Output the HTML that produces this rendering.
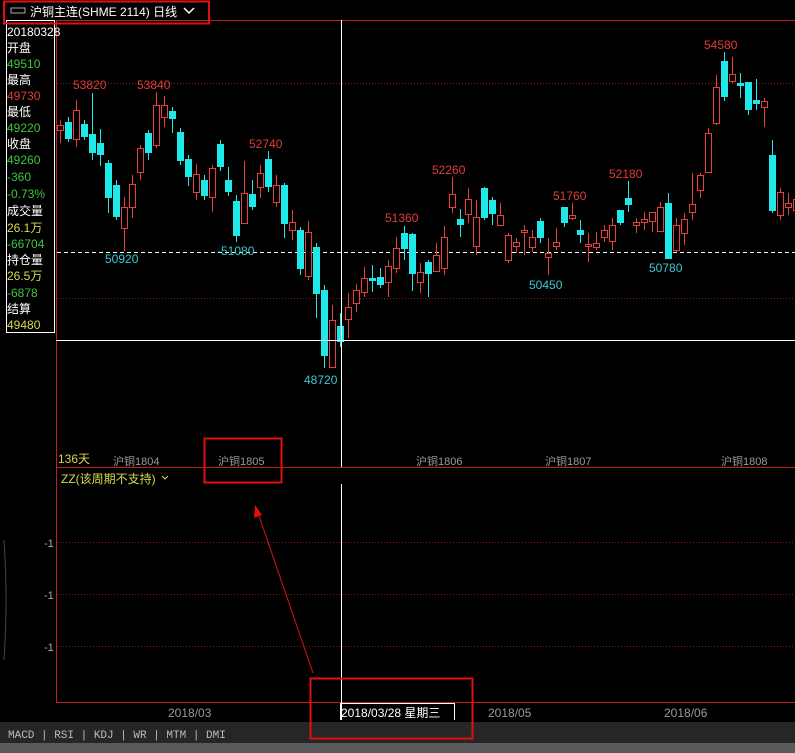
<!DOCTYPE html>
<html><head><meta charset="utf-8"><style>
html,body{margin:0;padding:0;background:#000;width:795px;height:753px;overflow:hidden;font-family:"Liberation Sans","Noto Sans CJK SC",sans-serif}
svg{position:absolute;left:0;top:0}
.t{font-family:"Liberation Sans","Noto Sans CJK SC",sans-serif;font-size:12px}
</style></head><body>
<svg id="s" width="795" height="753" xmlns="http://www.w3.org/2000/svg">
<rect x="0" y="722" width="795" height="21" fill="#262626"/>
<rect x="0" y="743" width="795" height="10" fill="#5a5a5a"/>
<path d="M4 540 Q8 600 4 660" stroke="#444" fill="none"/>
<g stroke="#8a1a1a" stroke-dasharray="1,2" stroke-width="1">
<line x1="57" y1="83.5" x2="795" y2="83.5"/>
<line x1="57" y1="298.5" x2="795" y2="298.5"/>
<line x1="57" y1="542.5" x2="795" y2="542.5"/>
<line x1="57" y1="594.5" x2="795" y2="594.5"/>
<line x1="57" y1="646.5" x2="795" y2="646.5"/>
</g>
<line x1="57" y1="252.5" x2="795" y2="252.5" stroke="#fff" stroke-dasharray="4,3"/>
<g stroke="#c02020" fill="none">
<line x1="56.5" y1="20" x2="56.5" y2="702"/>
<line x1="56" y1="20.5" x2="795" y2="20.5"/>
<line x1="56" y1="467.5" x2="795" y2="467.5"/>
<line x1="56" y1="702.5" x2="795" y2="702.5"/>
</g>
<g id="c"></g>
<line x1="341.5" y1="20" x2="341.5" y2="467" stroke="#fff"/>
<line x1="341.5" y1="484" x2="341.5" y2="720" stroke="#fff"/>
<line x1="56" y1="340.5" x2="795" y2="340.5" stroke="#fff"/>
<rect x="6.5" y="20.5" width="48" height="312" fill="#000" stroke="#fff"/>
<g class="t" font-size="12.5">
<text x="7" y="36" fill="#fff">20180328</text>
<text x="7" y="52" fill="#fff">开盘</text>
<text x="7" y="68" fill="#3ec43e">49510</text>
<text x="7" y="84" fill="#fff">最高</text>
<text x="7" y="100" fill="#e03c3c">49730</text>
<text x="7" y="116" fill="#fff">最低</text>
<text x="7" y="132" fill="#3ec43e">49220</text>
<text x="7" y="148" fill="#fff">收盘</text>
<text x="7" y="164" fill="#3ec43e">49260</text>
<text x="7" y="181" fill="#3ec43e">-360</text>
<text x="7" y="198" fill="#3ec43e">-0.73%</text>
<text x="7" y="215" fill="#fff">成交量</text>
<text x="7" y="232" fill="#d8d84a">26.1万</text>
<text x="7" y="248" fill="#3ec43e">-66704</text>
<text x="7" y="264" fill="#fff">持仓量</text>
<text x="7" y="280" fill="#d8d84a">26.5万</text>
<text x="7" y="297" fill="#3ec43e">-6878</text>
<text x="7" y="313" fill="#fff">结算</text>
<text x="7" y="329" fill="#d8d84a">49480</text>
</g>
<rect x="4" y="1.5" width="205" height="22" fill="none" stroke="#e01010" stroke-width="2"/>
<rect x="11" y="8" width="14" height="5" fill="none" stroke="#aaa"/>
<text x="30" y="16" class="t" fill="#fff" font-size="13">沪铜主连(SHME 2114)  日线</text>
<path d="M184 8 L189 13 L194 8" stroke="#fff" fill="none" stroke-width="1.5"/>
<g class="t" font-size="12">
<text x="73" y="89" fill="#e03c3c">53820</text>
<text x="137" y="89" fill="#e03c3c">53840</text>
<text x="249" y="148" fill="#e03c3c">52740</text>
<text x="105" y="263" fill="#3cc8d0">50920</text>
<text x="217" y="255" fill="#3cc8d0">-51080</text>
<text x="304" y="384" fill="#3cc8d0">48720</text>
<text x="385" y="222" fill="#e03c3c">51360</text>
<text x="432" y="174" fill="#e03c3c">52260</text>
<text x="553" y="200" fill="#e03c3c">51760</text>
<text x="529" y="289" fill="#3cc8d0">50450</text>
<text x="609" y="178" fill="#e03c3c">52180</text>
<text x="649" y="272" fill="#3cc8d0">50780</text>
<text x="704" y="49" fill="#e03c3c">54580</text>
<text x="58" y="463" fill="#d8d84a">136天</text>
<text x="113" y="465" fill="#999" font-size="11">沪铜1804</text>
<text x="218" y="465" fill="#999" font-size="11">沪铜1805</text>
<text x="416" y="465" fill="#999" font-size="11">沪铜1806</text>
<text x="545" y="465" fill="#999" font-size="11">沪铜1807</text>
<text x="721" y="465" fill="#999" font-size="11">沪铜1808</text>
<text x="61" y="483" fill="#d8d84a">ZZ(该周期不支持)</text>
<text x="44" y="547" fill="#aaa" font-size="11">-1</text>
<text x="44" y="599" fill="#aaa" font-size="11">-1</text>
<text x="44" y="651" fill="#aaa" font-size="11">-1</text>
<text x="168" y="717" fill="#999">2018/03</text>
<text x="488" y="717" fill="#999">2018/05</text>
<text x="664" y="717" fill="#999">2018/06</text>
<text x="341" y="717" fill="#fff">2018/03/28 星期三</text>
</g>
<path d="M162 476 L165 479 L168 476" stroke="#d8d84a" fill="none"/>
<path d="M340.5 720 V703.5 H454.5 V720" stroke="#fff" fill="none"/>
<rect x="204.5" y="438.5" width="77" height="44" fill="none" stroke="#e01010" stroke-width="2"/>
<rect x="310.5" y="678.5" width="162" height="60" fill="none" stroke="#e01010" stroke-width="2"/>
<line x1="313" y1="673" x2="258" y2="513" stroke="#e01010"/>
<path d="M255 505 L254 518 L262 515 Z" fill="#e01010"/>
<text x="8" y="738" fill="#bbb" font-family="Liberation Mono,monospace" font-size="11">MACD | RSI | KDJ | WR | MTM | DMI</text>
</svg>
<script>
var d=[
[60,'r',125,130,120,143],[68,'c',122,138,117,142],[76,'r',110,139,100,147],[84,'c',124,136,120,140],[92,'c',134,152,93,160],[100,'c',143,154,129,166],[108,'c',163,197,160,213],[116,'c',185,216,180,220],[124,'r',207,228,197,251],[132,'r',184,207,175,218],[140,'r',148,172,145,180],[148,'c',133,152,130,160],[156,'r',105,145,92,148],[164,'r',105,117,96,127],[172,'c',111,118,107,133],[180,'c',132,160,128,165],[188,'c',159,176,155,186],[196,'r',174,192,164,200],[204,'c',180,195,175,200],[212,'r',168,197,165,212],[220,'c',144,166,140,171],[228,'c',180,191,167,196],[236,'c',201,235,195,242],[244,'r',193,223,161,224],[252,'c',194,206,180,210],[260,'r',173,187,165,198],[268,'c',159,186,151,192],[276,'r',185,202,175,207],[284,'c',185,223,183,238],[292,'r',222,230,210,240],[300,'c',230,268,227,275],[308,'r',232,276,221,280],[316,'c',247,293,243,318],[324,'c',290,355,285,368],[332,'r',320,367,305,368],[340,'c',326,341,313,347],[348,'r',307,319,293,338],[356,'r',290,303,284,312],[364,'r',278,292,267,297],[372,'c',278,280,265,292],[380,'c',277,284,268,288],[388,'r',266,282,260,297],[396,'r',248,268,237,273],[404,'c',233,248,226,260],[412,'c',234,273,233,291],[420,'r',272,282,263,293],[428,'c',262,273,260,297],[436,'r',255,271,243,272],[444,'r',237,268,226,275],[452,'r',194,207,177,213],[460,'c',219,224,209,237],[468,'r',199,214,188,223],[476,'r',217,246,200,255],[484,'c',188,217,187,220],[492,'c',200,213,197,225],[500,'r',215,225,203,225],[508,'r',235,260,233,263],[516,'r',242,246,238,253],[524,'r',230,232,225,255],[532,'r',237,247,230,252],[540,'c',221,237,218,243],[548,'r',253,257,238,275],[556,'r',242,246,228,250],[564,'c',207,222,207,227],[572,'r',215,218,203,220],[580,'c',230,234,220,243],[588,'r',244,246,233,262],[596,'r',243,247,232,250],[604,'r',230,237,225,242],[612,'r',225,241,218,250],[620,'c',210,222,210,225],[628,'c',198,204,181,212],[636,'r',222,225,218,233],[644,'r',219,222,212,230],[652,'r',212,221,212,232],[660,'r',207,231,202,232],[668,'c',203,258,193,258],[676,'r',225,250,218,252],[684,'r',219,233,213,245],[692,'r',204,212,173,220],[700,'r',175,190,173,198],[708,'r',133,172,128,173],[716,'r',87,123,75,125],[724,'c',61,96,52,101],[732,'r',74,81,57,83],[740,'c',83,85,73,98],[748,'c',82,109,82,115],[756,'c',100,103,79,110],[764,'r',101,107,98,127],[772,'c',155,210,140,213],[780,'r',192,215,188,220],[788,'r',203,207,193,215],[796,'r',199,210,193,215]];
var h='';
d.forEach(function(a){var x=a[0],r=a[1]=='r',col=r?'#e8403c':'#1ee8e8';
h+='<line x1="'+(x+.5)+'" y1="'+a[4]+'" x2="'+(x+.5)+'" y2="'+a[5]+'" stroke="'+col+'"/>';
var hgt=Math.max(a[3]-a[2],1);
if(r)h+='<rect x="'+(x-2.5)+'" y="'+(a[2]+.5)+'" width="6" height="'+hgt+'" fill="#000" stroke="'+col+'"/>';
else h+='<rect x="'+(x-3)+'" y="'+a[2]+'" width="7" height="'+(hgt+1)+'" fill="'+col+'"/>';});
document.getElementById('c').innerHTML=h;
</script>
</body></html>
